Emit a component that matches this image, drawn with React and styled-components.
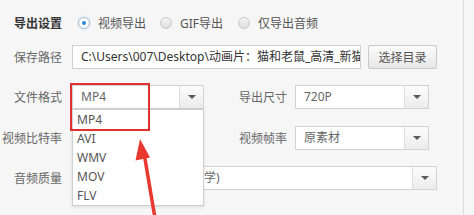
import React from "react";
import styled, { createGlobalStyle } from "styled-components";

const Global = createGlobalStyle`
  html, body { margin: 0; padding: 0; background: #f6f6f6; }
  body { font-family: "Noto Sans", "Noto Sans CJK SC", sans-serif; font-size: 12px; }
  * { box-sizing: border-box; }
`;

const Page = styled.div`
  position: relative;
  width: 474px;
  height: 215px;
  overflow: hidden;
  display: flex;
  background: #f6f6f6;
`;

const Panel = styled.div`
  width: 464px;
  flex-shrink: 0;
  border-right: 1px solid #dcdcdc;
  padding-top: 12px;
  display: flex;
  flex-direction: column;
`;

const Row = styled.div`
  display: flex;
  align-items: center;
  height: ${(p) => p.$h || 24}px;
  margin-top: ${(p) => p.$mt || 0}px;
`;

const Label = styled.div`
  width: 62px;
  flex-shrink: 0;
  margin-right: 10px;
  text-align: right;
  white-space: nowrap;
  color: ${(p) => (p.$strong ? "#333" : "#666")};
  font-weight: ${(p) => (p.$strong ? 700 : 400)};
`;

const SideLabel = styled.div`
  width: 91px;
  flex-shrink: 0;
  padding-right: 8px;
  text-align: right;
  white-space: nowrap;
  color: #666;
`;

const RadioGroup = styled.div`
  display: flex;
  align-items: center;
  margin-left: 6px;
`;

const RadioItem = styled.label`
  display: flex;
  align-items: center;
  color: #555;
  margin-right: ${(p) => p.$mr || 0}px;
`;

const RadioDot = styled.span`
  position: relative;
  width: 12px;
  height: 12px;
  border-radius: 50%;
  margin-right: 8px;
  border: 1px solid ${(p) => (p.$on ? "#a9bfd6" : "#c8c8c8")};
  background: ${(p) =>
    p.$on ? "#fff" : "linear-gradient(#f4f4f4, #dedede)"};
  box-shadow: ${(p) => (p.$on ? "0 0 2px rgba(80,140,220,0.35)" : "none")};
  &::after {
    content: "";
    display: ${(p) => (p.$on ? "block" : "none")};
    position: absolute;
    left: 3px;
    top: 3px;
    width: 4px;
    height: 4px;
    border-radius: 50%;
    background: #2f86e0;
  }
`;

const PathInput = styled.div`
  width: 289px;
  height: 24px;
  border: 1px solid #cfcfcf;
  background: #fff;
  padding-left: 8px;
  line-height: 22px;
  color: #333;
  white-space: nowrap;
  overflow: hidden;
`;

const Button = styled.div`
  width: 69px;
  height: 24px;
  margin-left: 7px;
  border: 1px solid #c9c9c9;
  border-radius: 2px;
  background: linear-gradient(#fbfbfb, #e7e7e7);
  color: #555;
  display: flex;
  align-items: center;
  justify-content: center;
`;

const SelectBox = styled.div`
  position: relative;
  width: ${(p) => p.$w}px;
  height: 24px;
  flex-shrink: 0;
  border: 1px solid #d2d2d2;
  background: #fff;
  display: flex;
`;

const SelectValue = styled.div`
  flex: 1;
  padding-left: 8px;
  line-height: 22px;
  color: #666;
  white-space: nowrap;
  overflow: hidden;
`;

const ArrowBox = styled.div`
  width: 24px;
  flex-shrink: 0;
  border-left: 1px solid #dedede;
  background: linear-gradient(#fcfcfc, #ececec);
  display: flex;
  align-items: center;
  justify-content: center;
  &::after {
    content: "";
    border-left: 4px solid transparent;
    border-right: 4px solid transparent;
    border-top: 4px solid #5a5a5a;
  }
`;

const Dropdown = styled.div`
  position: absolute;
  left: -1px;
  top: 23px;
  width: 132px;
  height: 97px;
  background: #fff;
  border: 1px solid #d0d0d0;
  box-shadow: 0 1px 3px rgba(0, 0, 0, 0.12);
  z-index: 3;
`;

const Option = styled.div`
  height: 19px;
  line-height: 19px;
  padding-left: 4px;
  color: #555;
`;

const RedBox = styled.div`
  position: absolute;
  left: -3px;
  top: -3px;
  width: 80px;
  height: 48px;
  border: 2px solid #e0302f;
  z-index: 4;
`;

const ArrowLayer = styled.svg`
  position: absolute;
  left: 0;
  top: 0;
  pointer-events: none;
  z-index: 5;
`;

function Select({ w, value, children }) {
  return (
    <SelectBox $w={w}>
      <SelectValue>{value}</SelectValue>
      <ArrowBox />
      {children}
    </SelectBox>
  );
}

export default function App() {
  return (
    <>
      <Global />
      <Page>
        <Panel>
          <Row $h={22}>
            <Label $strong>导出设置</Label>
            <RadioGroup>
              <RadioItem $mr={14}>
                <RadioDot $on />
                视频导出
              </RadioItem>
              <RadioItem $mr={15}>
                <RadioDot />
                GIF导出
              </RadioItem>
              <RadioItem>
                <RadioDot />
                仅导出音频
              </RadioItem>
            </RadioGroup>
          </Row>
          <Row $mt={11}>
            <Label>保存路径</Label>
            <PathInput>C:\Users\007\Desktop\动画片：猫和老鼠_高清_新猫</PathInput>
            <Button>选择目录</Button>
          </Row>
          <Row $mt={16}>
            <Label>文件格式</Label>
            <Select w={132} value="MP4">
              <Dropdown>
                <Option>MP4</Option>
                <Option>AVI</Option>
                <Option>WMV</Option>
                <Option>MOV</Option>
                <Option>FLV</Option>
              </Dropdown>
              <RedBox />
            </Select>
            <SideLabel>导出尺寸</SideLabel>
            <Select w={134} value="720P" />
          </Row>
          <Row $mt={17}>
            <Label>视频比特率</Label>
            <Select w={132} value="" />
            <SideLabel>视频帧率</SideLabel>
            <Select w={134} value="原素材" />
          </Row>
          <Row $mt={16}>
            <Label>音频质量</Label>
            <Select w={365} value="中等(128kbps，适合教学)" />
          </Row>
        </Panel>
        <ArrowLayer width="474" height="215" viewBox="0 0 474 215">
          <line x1="144.5" y1="156" x2="155" y2="218" stroke="#e8382f" strokeWidth="3.5" />
          <polygon points="140,139 135.5,160.5 150,157.5" fill="#e8382f" />
        </ArrowLayer>
      </Page>
    </>
  );
}
